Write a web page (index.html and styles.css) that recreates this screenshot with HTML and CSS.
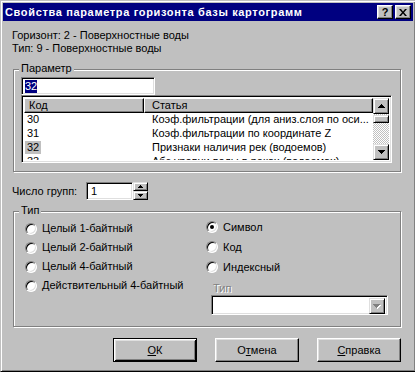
FILE: index.html
```html
<!DOCTYPE html>
<html lang="ru">
<head>
    <meta charset="UTF-8">
    <title>Свойства параметра горизонта базы картограмм</title>
    <link rel="stylesheet" href="styles.css">
</head>
<body>

    <div class="window">
        <div class="titlebar">
            <span class="title">Свойства параметра горизонта базы картограмм</span>
            <div class="caption-btns">
                <span class="cap-btn">?</span>
                <span class="cap-btn">
                    <svg width="8" height="7" viewBox="0 0 8 7"><path d="M0 0h2l2 2.5L6 0h2L5 3.5 8 7H6L4 4.5 2 7H0l3-3.5z"/></svg>
                </span>
            </div>
        </div>

        <div class="dialog-body">
            <div class="info">
                <div>Горизонт: 2 - Поверхностные воды</div>
                <div>Тип: 9 - Поверхностные воды</div>
            </div>

            <!-- Параметр -->
            <div class="group group-param">
                <span class="group-label">Параметр</span>
                <div class="edit edit-param"><span class="sel-text">32</span></div>
                <div class="listview">
                    <div class="lv-main">
                        <div class="lv-header">
                            <div class="hd hd-code">Код</div>
                            <div class="hd hd-name">Статья</div>
                        </div>
                        <div class="lv-row"><span class="c1"><span class="code">30</span></span><span class="c2">Коэф.фильтрации (для аниз.слоя по оси...</span></div>
                        <div class="lv-row"><span class="c1"><span class="code">31</span></span><span class="c2">Коэф.фильтрации по координате Z</span></div>
                        <div class="lv-row"><span class="c1"><span class="code selected">32</span></span><span class="c2">Признаки наличия рек (водоемов)</span></div>
                        <div class="lv-row"><span class="c1"><span class="code">33</span></span><span class="c2">Абс.уровни воды в реках (водоемах)</span></div>
                    </div>
                    <div class="vscroll">
                        <div class="sb-btn">
                            <svg width="7" height="4" viewBox="0 0 7 4"><path d="M3 0h1v1h1v1h1v1h1v1H0V3h1V2h1V1h1z"/></svg>
                        </div>
                        <div class="sb-track"><div class="sb-thumb"></div></div>
                        <div class="sb-btn">
                            <svg width="7" height="4" viewBox="0 0 7 4"><path d="M0 0h7v1H6v1H5v1H4v1H3V3H2V2H1V1H0z"/></svg>
                        </div>
                    </div>
                </div>
            </div>

            <div class="groups-row">
                <span class="groups-label">Число групп:</span>
                <div class="edit edit-count">1</div>
                <div class="spinner">
                    <div class="spin-btn">
                        <svg width="5" height="3" viewBox="0 0 5 3"><path d="M2 0h1v1h1v1h1v1H0V2h1V1h1z"/></svg>
                    </div>
                    <div class="spin-btn">
                        <svg width="5" height="3" viewBox="0 0 5 3"><path d="M0 0h5v1H4v1H3v1H2V2H1V1H0z"/></svg>
                    </div>
                </div>
            </div>

            <!-- Тип -->
            <div class="group group-type">
                <span class="group-label">Тип</span>
                <div class="type-cols">
                    <div class="col-left">
                        <label class="radio-row"><span class="radio"></span>Целый 1-байтный</label>
                        <label class="radio-row"><span class="radio"></span>Целый 2-байтный</label>
                        <label class="radio-row"><span class="radio"></span>Целый 4-байтный</label>
                        <label class="radio-row"><span class="radio"></span>Действительный 4-байтный</label>
                    </div>
                    <div class="col-right">
                        <label class="radio-row wide"><span class="radio checked"></span>Символ</label>
                        <label class="radio-row wide"><span class="radio"></span>Код</label>
                        <label class="radio-row wide"><span class="radio"></span>Индексный</label>
                        <div class="disabled-label">Тип</div>
                        <div class="combo">
                            <div class="combo-btn">
                                <svg width="8" height="5" viewBox="0 0 8 5"><path class="shade" d="M1 1h7v1H7v1H6v1H5v1H4V4H3V3H2V2H1z"/><path d="M0 0h7v1H6v1H5v1H4v1H3V3H2V2H1V1H0z"/></svg>
                            </div>
                        </div>
                    </div>
                </div>
            </div>

            <div class="buttons">
                <div class="btn default"><u>О</u>К</div>
                <div class="btn">О<u>т</u>мена</div>
                <div class="btn"><u>С</u>правка</div>
            </div>
        </div>
    </div>

</body>
</html>
```

FILE: styles.css
```css
body {
    margin: 0;
    width: 415px;
    height: 372px;
    overflow: hidden;
    background: #c0c0c0;
    font-family: "Liberation Sans", Arial, sans-serif;
    font-size: 11px;
    line-height: 13px;
    color: #000;
}
.window {
    width: 416px;
    height: 372px;
    box-sizing: border-box;
    padding: 2px;
    border: 1px solid;
    border-color: #c0c0c0 #000 #000 #c0c0c0;
    box-shadow: inset 1px 1px #fff, inset -1px -1px #808080;
    background: #c0c0c0;
}

/* заголовок окна */
.titlebar {
    height: 18px;
    background: #000080;
    display: flex;
    align-items: center;
    justify-content: space-between;
    padding: 0 2px 0 2px;
}
.title {
    color: #fff;
    font-weight: bold;
    font-size: 11px;
    letter-spacing: 0.65px;
}
.caption-btns {
    display: flex;
    gap: 2px;
}
.cap-btn {
    width: 16px;
    height: 14px;
    box-sizing: border-box;
    background: #c0c0c0;
    border: 1px solid;
    border-color: #fff #000 #000 #fff;
    box-shadow: inset -1px -1px #808080, inset 1px 1px #dfdfdf;
    display: flex;
    align-items: center;
    justify-content: center;
    font-weight: bold;
    font-size: 11px;
}
.cap-btn svg { display: block; }

.dialog-body {
    padding: 8px 0 0 9px;
}
.info { margin-left: 0; }

/* рамки групп */
.group {
    position: relative;
    width: 388px;
    box-sizing: border-box;
    margin-left: 1px;
    border: 1px solid #808080;
    box-shadow: inset 1px 1px #fff, 1px 1px #fff;
}
.group-label {
    position: absolute;
    top: -8px;
    left: 5px;
    padding: 0 2px;
    background: #c0c0c0;
}
.group-param {
    margin-top: 14px;
    height: 103px;
    padding: 7px 0 0 7px;
}

/* поля ввода */
.edit {
    box-sizing: border-box;
    background: #fff;
    border: 1px solid;
    border-color: #808080 #fff #fff #808080;
    box-shadow: inset 1px 1px #000, inset -1px -1px #dfdfdf;
}
.edit-param {
    width: 134px;
    height: 18px;
    padding: 2px 0 0 3px;
}
.sel-text {
    background: #000080;
    color: #fff;
    display: inline-block;
    line-height: 13px;
}

/* список */
.listview {
    width: 371px;
    height: 68px;
    box-sizing: border-box;
    background: #fff;
    border: 1px solid;
    border-color: #808080 #fff #fff #808080;
    box-shadow: inset 1px 1px #000, inset -1px -1px #dfdfdf;
    padding: 2px 2px 2px 2px;
    display: flex;
    overflow: hidden;
}
.lv-main {
    flex: 1;
    overflow: hidden;
}
.lv-header {
    display: flex;
    height: 15px;
}
.hd {
    box-sizing: border-box;
    background: #c0c0c0;
    border-top: 1px solid #fff;
    border-left: 1px solid #fff;
    border-bottom: 1px solid #000;
    border-right: 1px solid #000;
    box-shadow: inset -1px -1px #808080;
    line-height: 12px;
}
.hd-code {
    width: 120px;
    padding-left: 4px;
}
.hd-name {
    flex: 1;
    padding-left: 7px;
}
.lv-row {
    display: flex;
    height: 14px;
    white-space: nowrap;
}
.c1 {
    width: 120px;
    padding-left: 1px;
}
.code {
    display: inline-block;
    padding: 0 2px;
    height: 13px;
}
.code.selected { background: #c0c0c0; }
.c2 {
    padding-left: 7px;
    overflow: hidden;
}

/* полоса прокрутки */
.vscroll {
    width: 16px;
    display: flex;
    flex-direction: column;
}
.sb-btn {
    height: 16px;
    box-sizing: border-box;
    background: #c0c0c0;
    border: 1px solid;
    border-color: #dfdfdf #000 #000 #dfdfdf;
    box-shadow: inset 1px 1px #fff, inset -1px -1px #808080;
    display: flex;
    align-items: center;
    justify-content: center;
}
.sb-btn svg, .spin-btn svg, .combo-btn svg { display: block; }
.sb-track {
    flex: 1;
    background: repeating-conic-gradient(#c0c0c0 0 25%, #fff 0 50%) 0 0 / 2px 2px;
    padding-top: 1px;
}
.sb-thumb {
    height: 8px;
    box-sizing: border-box;
    background: #c0c0c0;
    border: 1px solid;
    border-color: #dfdfdf #000 #000 #dfdfdf;
    box-shadow: inset 1px 1px #fff, inset -1px -1px #808080;
}

/* число групп */
.groups-row {
    display: flex;
    align-items: center;
    margin-top: 10px;
    height: 18px;
}
.groups-label { width: 74px; }
.edit-count {
    width: 47px;
    height: 18px;
    padding: 2px 0 0 4px;
}
.spinner {
    width: 15px;
    height: 18px;
    display: flex;
    flex-direction: column;
}
.spin-btn {
    height: 9px;
    box-sizing: border-box;
    background: #c0c0c0;
    border: 1px solid;
    border-color: #dfdfdf #000 #000 #dfdfdf;
    box-shadow: inset 1px 1px #fff, inset -1px -1px #808080;
    display: flex;
    align-items: center;
    justify-content: center;
}

/* тип */
.group-type {
    margin-top: 11px;
    height: 116px;
    padding: 5px 0 0 11px;
}
.type-cols { display: flex; }
.col-left {
    width: 181px;
    padding-top: 2px;
}
.col-right {
    flex: 1;
}
.radio-row {
    display: flex;
    align-items: center;
    height: 19px;
    gap: 5px;
    white-space: nowrap;
}
.radio-row.wide { height: 20px; }
.radio {
    position: relative;
    width: 12px;
    height: 12px;
    box-sizing: border-box;
    border-radius: 50%;
    background: #fff;
    border: 1px solid;
    border-color: #808080 #fff #fff #808080;
    box-shadow: inset 1px 1px #000, inset -1px -1px #dfdfdf;
}
.radio.checked::after {
    content: "";
    position: absolute;
    left: 3px;
    top: 3px;
    width: 4px;
    height: 4px;
    border-radius: 50%;
    background: #000;
}
.disabled-label {
    margin: 5px 0 0 7px;
    color: #808080;
    text-shadow: 1px 1px #fff;
}
.combo {
    width: 177px;
    height: 20px;
    margin-left: 5px;
    box-sizing: border-box;
    background: #fff;
    border: 1px solid;
    border-color: #808080 #fff #fff #808080;
    box-shadow: inset 1px 1px #000, inset -1px -1px #dfdfdf;
    padding: 2px;
    display: flex;
    justify-content: flex-end;
}
.combo-btn {
    width: 16px;
    height: 16px;
    box-sizing: border-box;
    background: #c0c0c0;
    border: 1px solid;
    border-color: #dfdfdf #000 #000 #dfdfdf;
    box-shadow: inset 1px 1px #fff, inset -1px -1px #808080;
    display: flex;
    align-items: center;
    justify-content: center;
}
.combo-btn path { fill: #808080; }
.combo-btn path.shade { fill: #fff; }

/* кнопки */
.buttons {
    display: flex;
    justify-content: flex-end;
    gap: 18px;
    width: 389px;
    margin-top: 11px;
}
.btn {
    width: 84px;
    height: 24px;
    box-sizing: border-box;
    background: #c0c0c0;
    border: 1px solid;
    border-color: #fff #000 #000 #fff;
    box-shadow: inset -1px -1px #808080, inset 1px 1px #dfdfdf;
    display: flex;
    align-items: center;
    justify-content: center;
}
.btn.default {
    border: 1px solid #000;
    box-shadow: inset 1px 1px #fff, inset -1px -1px #000, inset 2px 2px #dfdfdf, inset -2px -2px #808080;
}
.btn u { text-decoration-thickness: 1px; text-underline-offset: 1px; }
```
